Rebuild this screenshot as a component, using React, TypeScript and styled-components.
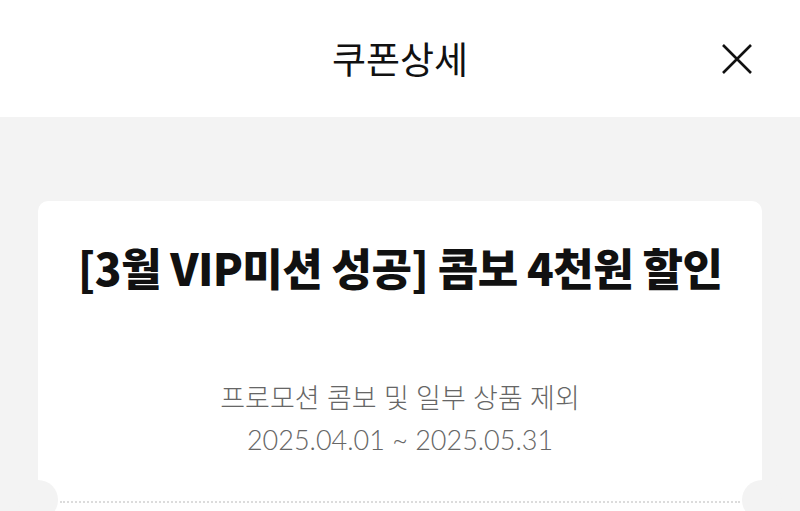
import React from 'react';
import styled, { createGlobalStyle } from 'styled-components';

const GlobalStyle = createGlobalStyle`
  html, body {
    margin: 0;
    padding: 0;
    background: #f3f3f3;
  }
  * {
    box-sizing: border-box;
  }
`;

const Page = styled.div`
  min-height: 100vh;
  background: #f3f3f3;
  font-family: 'Noto Sans CJK KR', 'Noto Sans', sans-serif;
  color: #111;
`;

const Header = styled.header`
  height: 117px;
  background: #fff;
  display: grid;
  grid-template-columns: 1fr auto 1fr;
  align-items: center;
  padding: 0 46px;
`;

const HeaderTitle = styled.h1`
  grid-column: 2;
  margin: 0;
  font-size: 37px;
  font-weight: 400;
  line-height: 1;
  color: #111;
`;

const CloseButton = styled.button`
  grid-column: 3;
  justify-self: end;
  width: 34px;
  height: 34px;
  padding: 0;
  border: none;
  background: none;
  display: flex;
  align-items: center;
  justify-content: center;
  cursor: pointer;
`;

const Card = styled.section`
  margin: 84px 38px 0;
  background: #fff;
  border-radius: 10px 10px 0 0;
  padding: 40px 0 60px;
  display: flex;
  flex-direction: column;
  align-items: center;
`;

const CouponName = styled.h2`
  margin: 0;
  font-size: 44px;
  font-weight: 900;
  line-height: 52px;
  letter-spacing: -0.6px;
  white-space: nowrap;
  color: #111;
`;

const Details = styled.div`
  margin-top: 84px;
  display: flex;
  flex-direction: column;
  align-items: center;
  font-family: 'Lato', 'Noto Sans CJK KR', sans-serif;
  font-size: 27px;
  font-weight: 300;
  line-height: 42px;
  color: #666;
`;

const TearLine = styled.div`
  position: relative;
  align-self: stretch;
  margin: 40px 22px 0;
  border-top: 2px dotted #dcdcdc;

  &::before,
  &::after {
    content: '';
    position: absolute;
    top: -23px;
    width: 40px;
    height: 40px;
    border-radius: 50%;
    background: #f3f3f3;
  }
  &::before {
    left: -42px;
  }
  &::after {
    right: -42px;
  }
`;

const CloseIcon = () => (
  <svg width="32" height="32" viewBox="0 0 32 32" fill="none">
    <path d="M2 2 L30 30 M30 2 L2 30" stroke="#111" strokeWidth="2.6" strokeLinecap="butt" />
  </svg>
);

const App = () => {
  return (
    <Page>
      <GlobalStyle />
      <Header>
        <HeaderTitle>쿠폰상세</HeaderTitle>
        <CloseButton aria-label="닫기">
          <CloseIcon />
        </CloseButton>
      </Header>
      <Card>
        <CouponName>[3월 VIP미션 성공] 콤보 4천원 할인</CouponName>
        <Details>
          <span>프로모션 콤보 및 일부 상품 제외</span>
          <span>2025.04.01 ~ 2025.05.31</span>
        </Details>
        <TearLine />
      </Card>
    </Page>
  );
};

export default App;
